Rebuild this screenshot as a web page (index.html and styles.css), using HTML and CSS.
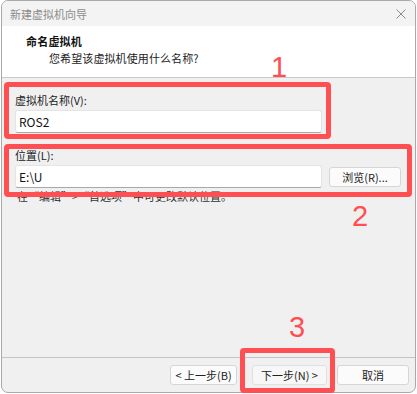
FILE: index.html
```html
<!DOCTYPE html>
<html lang="zh">
<head>
<meta charset="utf-8">
<link rel="stylesheet" href="styles.css">
</head>
<body>
<div class="window">
  <div class="titlebar">
    <span class="title">新建虚拟机向导</span>
    <svg class="close" width="10" height="10" viewBox="0 0 10 10"><path d="M0.5 0.5 L9.5 9.5 M9.5 0.5 L0.5 9.5" stroke="#8a8a8a" stroke-width="1" fill="none"/></svg>
  </div>
  <div class="header">
    <div class="h-title">命名虚拟机</div>
    <div class="h-sub">您希望该虚拟机使用什么名称?</div>
  </div>
  <div class="content">
    <div class="label">虚拟机名称(V):</div>
    <div class="row">
      <div class="input">ROS2</div>
    </div>
    <div class="label second">位置(L):</div>
    <div class="row">
      <div class="input">E:\U</div>
      <div class="btn browse">浏览(R)...</div>
    </div>
    <div class="hint">在“编辑”&gt;“首选项”中可更改默认位置。</div>
  </div>
  <div class="footer">
    <div class="btn back">&lt; 上一步(B)</div>
    <div class="btn next">下一步(N) &gt;</div>
    <div class="btn cancel">取消</div>
  </div>
</div>
<div class="mark box1"></div>
<div class="mark box2"></div>
<div class="mark box3"></div>
<div class="num n1">1</div>
<div class="num n2">2</div>
<div class="num n3">3</div>
</body>
</html>
```
FILE: styles.css
```css
html, body {
  margin: 0;
  padding: 0;
  background: #ffffff;
  width: 417px;
  height: 394px;
  overflow: hidden;
  position: relative;
  font-family: "Noto Sans CJK SC", "Liberation Sans", sans-serif;
}
.window {
  box-sizing: border-box;
  margin-left: 1px;
  width: 415px;
  height: 393px;
  border: 1px solid #a9a9a9;
  border-radius: 7px;
  overflow: hidden;
  background: #f0f0f0;
  display: flex;
  flex-direction: column;
}
.titlebar {
  height: 25px;
  background: #f3f3f3;
  display: flex;
  align-items: center;
  justify-content: space-between;
  padding: 0 9px 0 8px;
}
.title {
  font-size: 11px;
  color: #8c8c8c;
  line-height: 14px;
}
.close { display: block; }
.header {
  background: #ffffff;
  border-bottom: 1px solid #c9c9c9;
  padding: 8px 0 0 24px;
  box-sizing: border-box;
  height: 52px;
}
.h-title {
  font-size: 11px;
  font-weight: 700;
  line-height: 14px;
  color: #111;
  letter-spacing: 0.2px;
}
.h-sub {
  font-size: 11px;
  line-height: 14px;
  margin-top: 3px;
  padding-left: 23px;
  color: #222;
  letter-spacing: 0.1px;
}
.content {
  flex: 1;
  padding: 15px 0 0 13px;
  border-bottom: 1px solid #c4c4c4;
}
.label {
  font-size: 11px;
  line-height: 14px;
  color: #222;
}
.label.second { margin-top: 15px; }
.row {
  margin-top: 3px;
  display: flex;
  align-items: center;
  gap: 7px;
}
.input {
  box-sizing: border-box;
  width: 307px;
  height: 23px;
  background: #ffffff;
  border: 1px solid #e4e4e4;
  border-bottom-color: #a8a8a8;
  border-radius: 3px;
  font-size: 12px;
  line-height: 21px;
  padding-left: 3px;
  color: #111;
}
.btn {
  box-sizing: border-box;
  height: 20px;
  background: #fbfbfb;
  border: 1px solid #d6d6d6;
  border-radius: 3px;
  font-size: 11px;
  line-height: 18px;
  color: #222;
  text-align: center;
}
.browse { width: 72px; }
.hint {
  margin-top: 1px;
  font-size: 11px;
  line-height: 14px;
  color: #333;
  padding-left: 2px;
}
.footer {
  height: 34px;
  display: flex;
  align-items: center;
  justify-content: flex-end;
  padding-right: 6px;
}
.back { width: 67px; margin-right: 15px; }
.next { width: 75px; margin-right: 10px; background: #f7f7f7; border-color: #e0e0e0; }
.cancel { width: 72px; }
.mark {
  position: absolute;
  box-sizing: border-box;
  border: 5px solid #ff4f52;
  border-radius: 4px;
}
.box1 { left: 4px; top: 82px; width: 327px; height: 57px; }
.box2 { left: 4px; top: 144px; width: 408px; height: 53px; }
.box3 { left: 240px; top: 348px; width: 95px; height: 45px; }
.num {
  position: absolute;
  font-family: "Liberation Sans", sans-serif;
  font-size: 29px;
  line-height: 29px;
  color: #ff4f52;
}
.n1 { left: 271px; top: 53px; }
.n2 { left: 352px; top: 202px; }
.n3 { left: 289px; top: 313px; }
```
